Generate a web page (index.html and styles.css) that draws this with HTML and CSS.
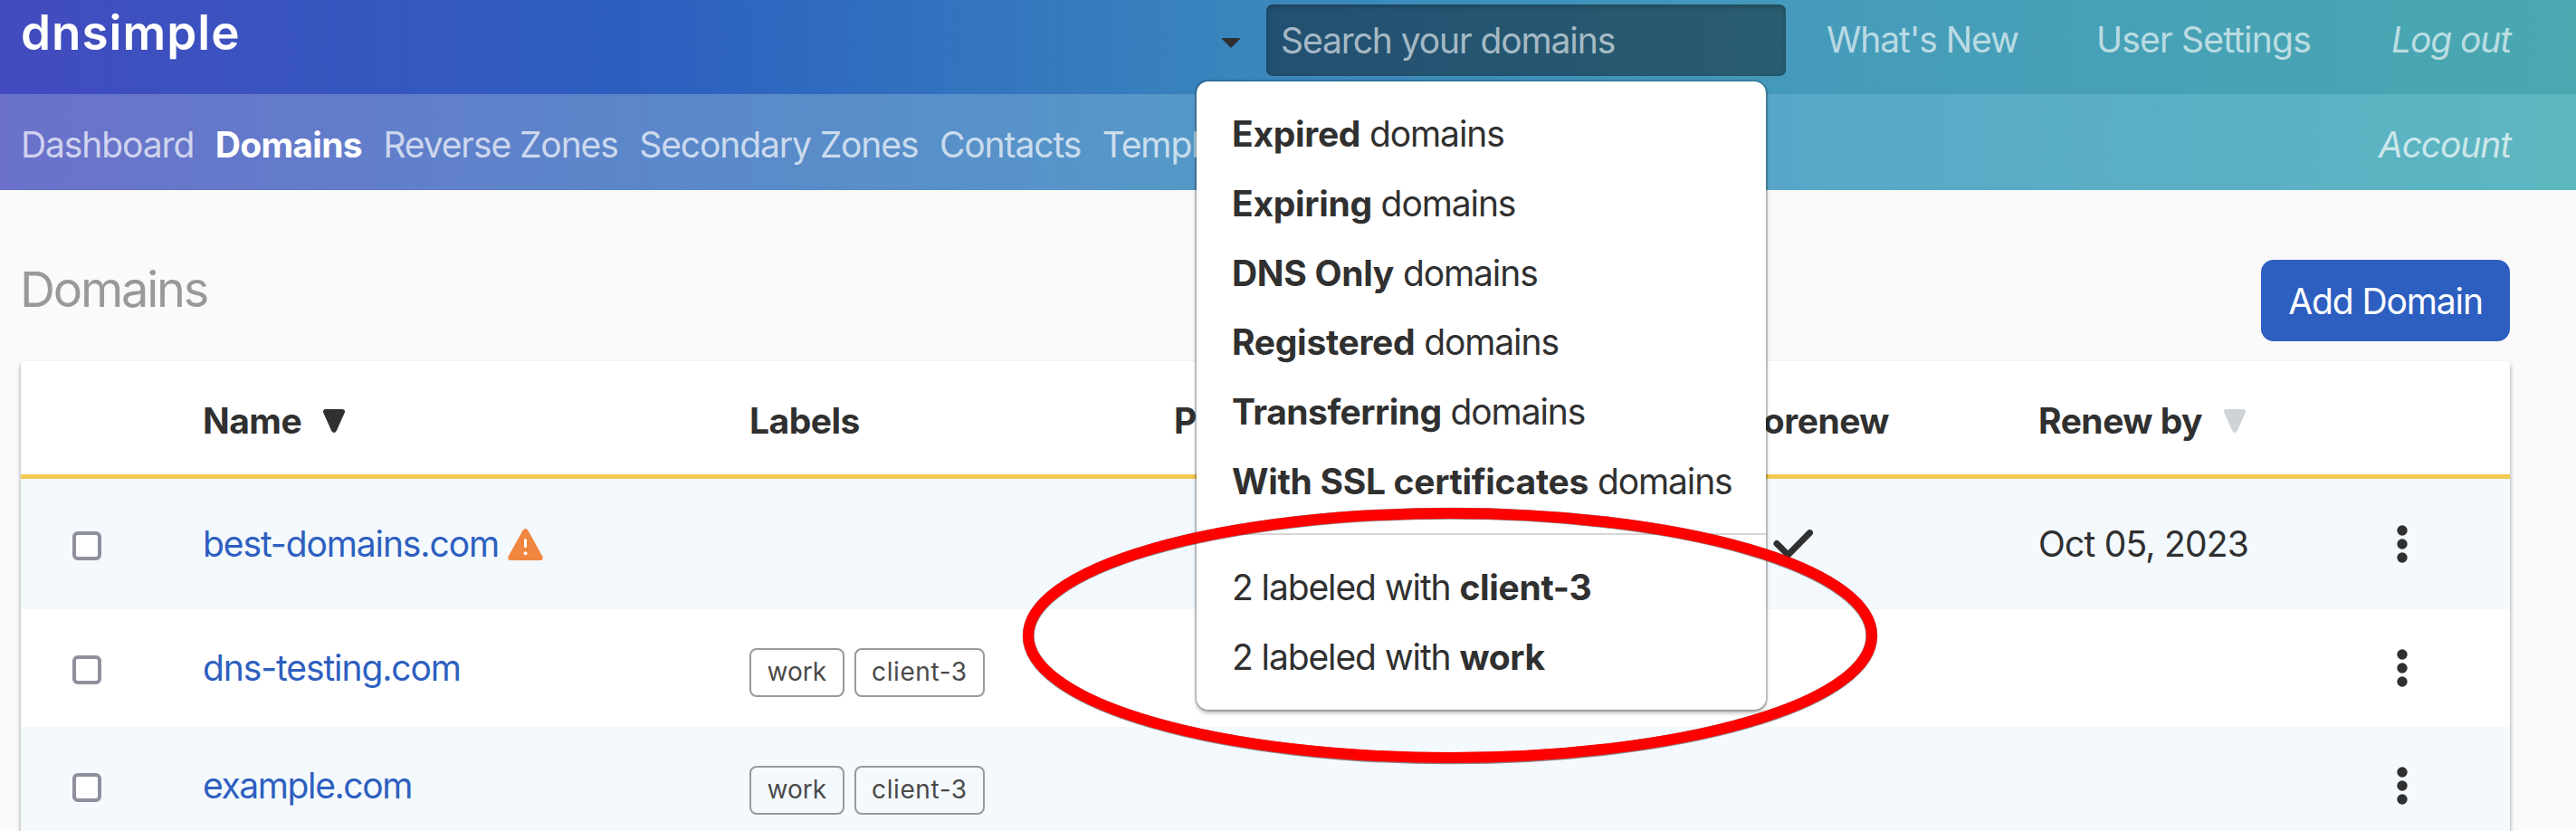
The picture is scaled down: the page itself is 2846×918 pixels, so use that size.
FILE: index.html
```html
<!DOCTYPE html>
<html lang="en">
<head>
<meta charset="utf-8">
<title>Domains</title>
<link rel="stylesheet" href="styles.css">
</head>
<body>
<header class="topbar">
  <a class="logo">dnsimple</a>
  <div class="search">
    <i class="caret"></i>
    <div class="search-field">Search your domains</div>
    <div class="menu">
      <ul class="menu-group">
        <li><b>Expired</b> domains</li>
        <li><b>Expiring</b> domains</li>
        <li><b>DNS Only</b> domains</li>
        <li><b>Registered</b> domains</li>
        <li><b class="tight">Transferring</b> domains</li>
        <li><b>With SSL certificates</b> domains</li>
      </ul>
      <ul class="menu-group">
        <li>2 labeled with <b>client-3</b></li>
        <li>2 labeled with <b>work</b></li>
      </ul>
    </div>
  </div>
  <nav class="user-links">
    <a class="whats-new">What's New</a>
    <a class="settings">User Settings</a>
    <a class="logout">Log out</a>
  </nav>
</header>
<nav class="subnav">
  <a>Dashboard</a>
  <a class="active">Domains</a>
  <a>Reverse Zones</a>
  <a>Secondary Zones</a>
  <a>Contacts</a>
  <a>Templ</a>
  <a class="account">Account</a>
</nav>
<main class="page">
  <div class="page-head">
    <h1>Domains</h1>
    <a class="button">Add Domain</a>
  </div>
  <section class="table">
    <div class="row head">
      <div></div>
      <div>Name<svg class="sort" viewBox="0 0 24 26"><path d="M3 0H21Q25 0 23.700 4L15 23.500Q12 28.500 9 23.500L.3 4Q-1 0 3 0Z"/></svg></div>
      <div>Labels</div>
      <div>P</div>
      <div class="auto">Autorenew</div>
      <div>Renew by<svg class="sort muted" viewBox="0 0 24 26"><path d="M3 0H21Q25 0 23.700 4L15 23.500Q12 28.500 9 23.500L.3 4Q-1 0 3 0Z"/></svg></div>
      <div></div>
    </div>
    <div class="row first">
      <div><i class="checkbox"></i></div>
      <div><a class="domain">best-domains.com</a><svg class="warn" viewBox="0 0 39 35"><path class="warn-bg" d="M16.500 2Q19.500-2 22.500 2L38.500 31Q39.500 35 36 35H3Q-.5 35 .5 31Z"/><path class="warn-mark" d="M19.500 12.500V19.500"/><circle class="warn-dot" cx="19.500" cy="27.300" r="2"/></svg></div>
      <div></div>
      <div></div>
      <div><svg class="check" viewBox="0 0 44 32"><path d="M4 15.500L16.500 28L40.500 3.500"/></svg></div>
      <div class="date">Oct 05, 2023</div>
      <div><svg class="dots" viewBox="0 0 12 42"><circle cx="6" cy="6" r="5.700"/><circle cx="6" cy="21" r="5.700"/><circle cx="6" cy="36" r="5.700"/></svg></div>
    </div>
    <div class="row">
      <div><i class="checkbox"></i></div>
      <div><a class="domain">dns-testing.com</a></div>
      <div class="labels"><em>work</em><em class="wide">client-3</em></div>
      <div></div>
      <div></div>
      <div></div>
      <div><svg class="dots" viewBox="0 0 12 42"><circle cx="6" cy="6" r="5.700"/><circle cx="6" cy="21" r="5.700"/><circle cx="6" cy="36" r="5.700"/></svg></div>
    </div>
    <div class="row">
      <div><i class="checkbox"></i></div>
      <div><a class="domain tight">example.com</a></div>
      <div class="labels"><em>work</em><em class="wide">client-3</em></div>
      <div></div>
      <div></div>
      <div></div>
      <div><svg class="dots" viewBox="0 0 12 42"><circle cx="6" cy="6" r="5.700"/><circle cx="6" cy="21" r="5.700"/><circle cx="6" cy="36" r="5.700"/></svg></div>
    </div>
  </section>
</main>
<svg class="highlight" viewBox="0 0 948 290"><ellipse class="ring-shade" cx="474" cy="145.500" rx="465.800" ry="135.200"/><ellipse class="ring" cx="474" cy="145" rx="466" ry="135"/></svg>
</body>
</html>
```

FILE: styles.css
```css
* { box-sizing: border-box; }
body {
  margin: 0;
  height: 918px;
  overflow: hidden;
  position: relative;
  background: #fafafa;
  color: #303030;
  font: 39px/48px Inter, "Liberation Sans", sans-serif;
  letter-spacing: -1.1px;
}
b { letter-spacing: -.3px; }
b.tight { letter-spacing: -.5px; }
.topbar {
  height: 104px;
  display: flex;
  align-items: flex-start;
  background: linear-gradient(90deg, #434bbf 0%, #2c5fc0 25%, #3985bd 48%, #459cba 71%, #49a8b0 100%);
}
.logo {
  width: 1322px;
  padding: 6px 0 0 23px;
  color: #fff;
  font-size: 53px;
  font-weight: 600;
  letter-spacing: 1px;
  line-height: 60px;
}
.search {
  position: relative;
  width: 651px;
  display: flex;
  align-items: center;
  padding: 5px 0 0 27px;
}
.caret {
  border: 11px solid transparent;
  border-top-color: #303030;
  border-bottom: 0;
  margin: 6px 28px 0 0;
}
.search-field {
  flex: 1;
  height: 79px;
  padding: 16px 0 0 16px;
  border-radius: 7px;
  background: rgba(0, 0, 0, .4);
  box-shadow: inset 0 2px 5px rgba(0, 0, 0, .25);
  color: rgba(255, 255, 255, .6);
}
.menu {
  position: absolute;
  z-index: 2;
  top: 90px;
  left: 0;
  width: 629px;
  height: 694px;
  border-radius: 13px;
  background: #fff;
  box-shadow: 0 0 0 2px rgba(0, 0, 0, .15), 0 3px 5px rgba(0, 0, 0, .35);
}
.menu-group {
  margin: 0;
  padding: 20px 0 18.600px 39px;
  list-style: none;
  line-height: 76.8px;
  white-space: nowrap;
}
.menu-group + .menu-group { border-top: 2px solid #d5d5d5; }
.user-links {
  display: flex;
  flex: 1;
  padding-top: 20px;
  color: rgba(255, 255, 255, .65);
}
.whats-new { width: 298px; margin-left: 45px; }
.settings { width: 326px; letter-spacing: -.8px; }
.logout { font-style: italic; }
.subnav {
  height: 106px;
  display: flex;
  gap: 23.500px;
  padding: 32px 72px 0 23px;
  background: linear-gradient(90deg, #6b71ca 0%, #5b87ca 25%, #559ac8 48%, #58a8c8 71%, #5db7c0 100%);
  color: rgba(255, 255, 255, .7);
  white-space: nowrap;
}
.active { color: #fff; font-weight: 700; letter-spacing: -.7px; }
.account { margin-left: auto; font-style: italic; }
.page { padding: 77px 73px 0 23px; }
.page-head {
  display: flex;
  justify-content: space-between;
  align-items: flex-start;
  height: 112px;
}
h1 {
  margin: 3px 0 0;
  color: #999;
  font-size: 54px;
  line-height: 60px;
  font-weight: 400;
  letter-spacing: -2.200px;
  text-indent: -1px;
}
.button {
  width: 275px;
  height: 90px;
  border-radius: 14px;
  background: #2d5fc0;
  color: #fff;
  text-align: center;
  line-height: 91px;
}
.table {
  background: #fff;
  border-radius: 4px 4px 0 0;
  box-shadow: 0 3px 5px rgba(0, 0, 0, .4);
}
.row {
  display: grid;
  grid-template-columns: 201px 604px 469px 585px 370px 396px 1fr;
  align-items: center;
  height: 130px;
}
.row > div { display: flex; align-items: center; white-space: nowrap; }
.row:nth-child(even) { background: #f4f9fd; }
.head {
  padding-top: 6px;
  border-bottom: 5px solid #f2ca54;
  font-weight: 700;
  letter-spacing: -.5px;
}
.first { height: 144px; }
.sort { width: 24px; height: 26px; margin-left: 24px; fill: #303030; }
.muted { fill: #cdd3d7; }
.checkbox {
  width: 32px;
  height: 32px;
  margin: 4px 0 0 57px;
  border: 4px solid #8f8f9d;
  border-radius: 6px;
  background: #fff;
}
.date { letter-spacing: -.8px; }
.domain { color: #2d5fc0; }
.domain.tight { letter-spacing: -1.400px; }
.warn { width: 39px; height: 35px; margin-left: 10px; }
.warn-bg { fill: #f18640; }
.warn-mark { stroke: #fff; stroke-width: 3; stroke-linecap: round; }
.warn-dot { fill: #fff; }
.check { width: 44px; height: 32px; margin-left: 77px; fill: none; stroke: #303030; stroke-width: 7; stroke-linecap: round; }
.dots { width: 12px; height: 42px; fill: #303030; }
.labels { gap: 11px; padding-top: 9px; letter-spacing: 0; }
.labels em {
  height: 54px;
  padding: 0 17.5px;
  border: 2px solid #999;
  border-radius: 8px;
  color: #4a4a4a;
  font-style: normal;
  font-size: 28px;
  line-height: 48px;
}
.labels .wide { letter-spacing: .6px; }
.highlight {
  position: absolute;
  z-index: 3;
  left: 1128px;
  top: 557px;
  width: 948px;
  height: 290px;
  fill: none;
}
.ring { stroke: #f00; stroke-width: 12; }
.ring-shade { stroke: rgba(60, 60, 60, .6); stroke-width: 13; }
```
